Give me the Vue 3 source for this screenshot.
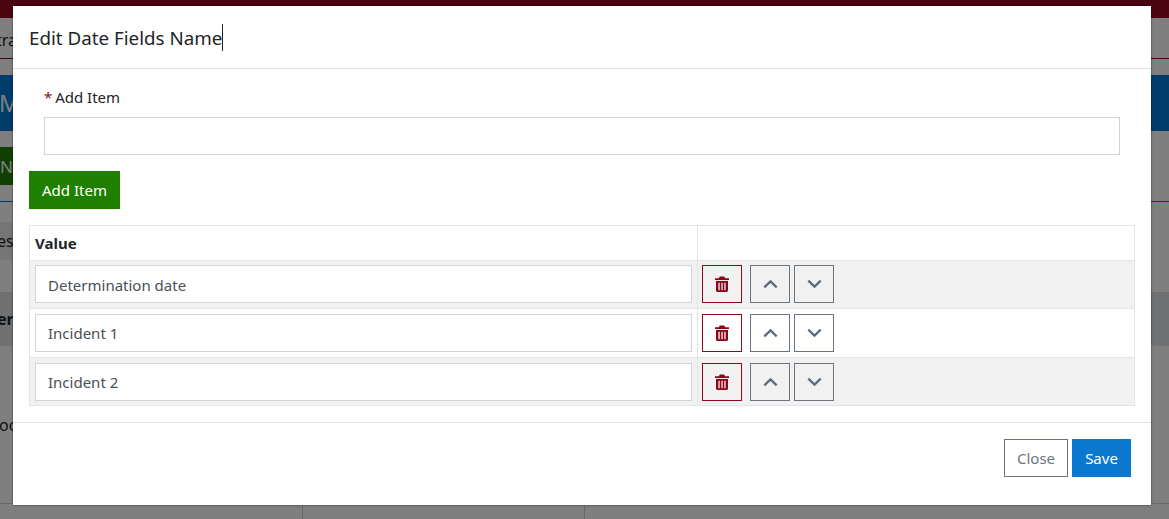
<script setup>
const items = ['Determination date', 'Incident 1', 'Incident 2']
</script>

<template>
  <div class="root">
    <div class="page">
      <div class="topbar"></div>
      <div class="nav"><span class="crumb">tra</span></div>
      <div class="hero"><span class="hero-text">M</span></div>
      <div class="new-btn"><span class="new-text">N</span></div>
      <div class="tabs"><div class="tab"><span class="tab-text">es</span></div></div>
      <div class="grid-head"><span class="grid-text">er</span></div>
      <div class="grid-row"><span class="row-text">oo</span></div>
      <div class="grid-foot"><div class="cell a"></div><div class="cell b"></div></div>
    </div>

    <div class="backdrop">
      <div class="modal">
        <header class="modal-head">
          <h2 class="title"><span class="title-text">Edit Date Fields Name</span><span class="caret"></span></h2>
        </header>
        <section class="modal-body">
          <div class="field">
            <label class="label"><span class="req">*</span> Add Item</label>
            <input class="control" type="text" />
          </div>
          <button class="btn green">Add Item</button>
          <table class="table">
            <thead>
              <tr><th class="c1">Value</th><th></th></tr>
            </thead>
            <tbody>
              <tr v-for="(item, i) in items" :key="item" :class="{ odd: i % 2 === 0 }">
                <td class="c1"><input class="control" type="text" :value="item" /></td>
                <td class="c2">
                  <div class="actions">
                    <button class="icon danger" aria-label="Delete">
                      <svg width="14" height="16" viewBox="0 0 14 16">
                        <path fill="#8a0618" fill-rule="evenodd" d="M0 2.2h3.9L4.7 .6h4.6l.8 1.600H14v1.700H0zM1 5h12v9.600c0 .8-.6 1.400-1.400 1.400H2.400c-.8 0-1.400-.6-1.400-1.400zM3.400 6.800v7.400h1.300V6.800zM6.350 6.800v7.400h1.300V6.800zM9.300 6.800v7.400h1.300V6.800z"/>
                      </svg>
                    </button>
                    <button class="icon neutral" aria-label="Move up">
                      <svg width="15" height="10" viewBox="0 0 15 10"><path d="M1.300 8.300 7.500 2.300l6.200 6" fill="none" stroke="#5d6b7c" stroke-width="2.300"/></svg>
                    </button>
                    <button class="icon neutral" aria-label="Move down">
                      <svg width="15" height="10" viewBox="0 0 15 10"><path d="M1.300 1.700 7.500 7.700l6.200-6" fill="none" stroke="#5d6b7c" stroke-width="2.300"/></svg>
                    </button>
                  </div>
                </td>
              </tr>
            </tbody>
          </table>
        </section>
        <footer class="modal-foot">
          <button class="btn outline">Close</button>
          <button class="btn blue">Save</button>
        </footer>
      </div>
    </div>
  </div>
</template>

<style>
html, body { margin: 0; overflow: hidden; background: #fff; }
</style>

<style scoped>
.root {
  position: relative;
  width: 1169px;
  height: 519px;
  overflow: hidden;
  font-family: "Noto Sans", "Open Sans", sans-serif;
  color: #212529;
}
.page { display: flex; flex-direction: column; height: 519px; background: #fff; }
.topbar { height: 18px; background: #940a20; }
.nav { height: 40px; border-bottom: 1px solid #940a20; display: flex; align-items: center; font-size: 16px; }
.crumb { margin-left: -4px; padding-top: 4px; }
.hero { height: 56px; margin-top: 16px; background: #0078d4; display: flex; align-items: center; color: #fff; font-size: 23px; }
.hero-text { margin-left: -1px; }
.new-btn { width: 60px; height: 38px; margin-top: 16px; background: #1f8000; color: #fff; display: flex; align-items: center; font-size: 17px; }
.new-text { margin-left: 0; }
.tabs { margin-top: 16px; border-top: 1px solid #0078d4; padding-top: 20px; }
.tab { width: 200px; height: 38px; background: #ebebeb; display: flex; align-items: center; font-size: 16px; }
.tab-text { margin-left: -3px; }
.grid-head { height: 54px; margin-top: 32px; background: #dfe2e6; display: flex; align-items: center; font-weight: 700; font-size: 16px; flex: none; }
.grid-text { margin-left: -3px; }
.grid-row { flex: 1; display: flex; align-items: center; font-size: 16px; padding-top: 1px; }
.row-text { margin-left: -1px; }
.grid-foot { height: 15px; border-top: 1px solid #d0d0d0; display: flex; }
.cell { border-right: 1px solid #d0d0d0; }
.cell.a { width: 302px; }
.cell.b { width: 281px; }

.backdrop { position: absolute; inset: 0; background: rgba(0, 0, 0, .5); }
.modal {
  width: 1138px;
  height: 499px;
  margin: 6px 0 0 13px;
  background: #fff;
  box-shadow: 0 0 2px rgba(0, 0, 0, .6);
  display: flex;
  flex-direction: column;
}
.modal-head { height: 62px; flex: none; border-bottom: 1px solid #dee2e6; display: flex; align-items: center; padding-left: 16px; }
.title { margin: 0; font-size: 18.8px; font-weight: 400; display: flex; align-items: center; }
.title-text { padding-top: 1px; }
.caret { width: 1px; height: 27px; background: #212529; }
.modal-body { flex: 1; padding: 16px 16px 0; }
.field { padding: 0 15px; margin-bottom: 16px; }
.label { display: block; font-size: 15px; line-height: 24px; margin: 0 0 8px; }
.req { color: #940a20; margin-right: -1px; }
.control {
  display: block;
  width: 100%;
  height: 38px;
  box-sizing: border-box;
  border: 1px solid #ced4da;
  border-radius: 0;
  padding: 0 12px;
  font: inherit;
  font-size: 15px;
  color: #495057;
  background: #fff;
  outline: none;
}
.btn { height: 38px; border: 1px solid transparent; border-radius: 0; font: inherit; font-size: 15px; padding: 0 12px; }
.btn.green { background: #1f8000; color: #fff; width: 91px; display: block; }
.btn.blue { background: #0b78cf; color: #fff; width: 59px; }
.btn.outline { background: #fff; color: #6c757d; border-color: #6c757d; width: 64px; }
.table { width: 1106px; margin-top: 16px; border-collapse: collapse; table-layout: fixed; font-size: 15px; }
.table th, .table td { border: 1px solid #e1e4e8; padding: 5px; text-align: left; }
.table th { height: 24px; font-weight: 700; }
.table tbody tr:first-child td { padding-top: 4px; }
.table tbody tr:first-child .control { padding-top: 2px; }
.table tbody tr:last-child td { padding-bottom: 4px; }
.table .c1 { width: 657px; }
.table .c2 { padding-left: 4px; }
.odd td { background: #f1f1f1; }
.actions { display: flex; }
.icon { width: 40px; height: 38px; padding: 0; background: transparent; border: 1px solid #6c757d; border-radius: 0; display: flex; align-items: center; justify-content: center; margin-right: 4px; }
.icon.danger { border-color: #8f0a1e; margin-right: 8px; }
.modal-foot { height: 83px; flex: none; border-top: 1px solid #dee2e6; box-sizing: border-box; display: flex; justify-content: flex-end; gap: 4px; padding: 16px 20px 0 0; }
</style>
